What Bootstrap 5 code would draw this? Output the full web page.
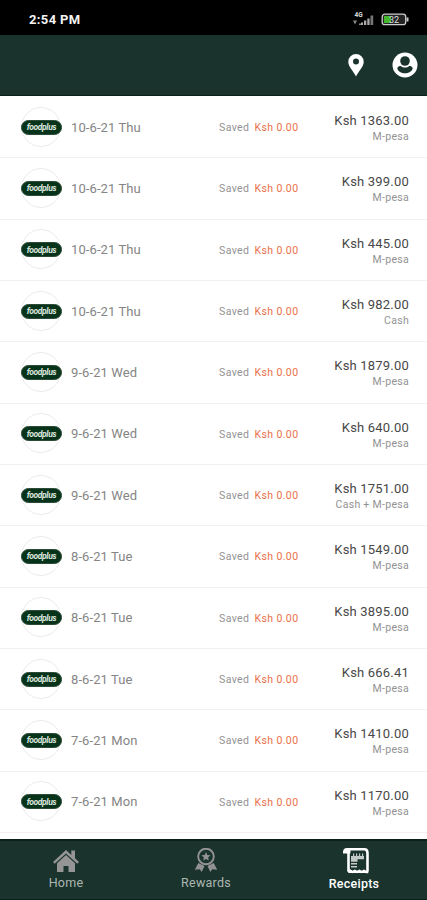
<!DOCTYPE html>
<html lang="en">
<head>
<meta charset="utf-8">
<meta name="viewport" content="width=device-width, initial-scale=1">
<title>Receipts</title>
<link href="https://cdn.jsdelivr.net/npm/bootstrap@5.3.0/dist/css/bootstrap.min.css" rel="stylesheet">
<style>
body{font-family:Roboto,"Liberation Sans",sans-serif;line-height:1}
.screen{height:900px;overflow:hidden;background:#fff}
.statusbar{height:35px;background:#000;padding:4px 18px 0 29px}
.clock{font-size:13px;font-weight:700;color:#f4f4f4;letter-spacing:.35px}
.topbar{height:61px;background:#1a332d;border-bottom:1px solid #0b2019;padding-right:9px}
.receipts-list{padding-top:1px}
.receipt{height:61.33px;border-bottom:1px solid #f1f1f1;padding:0 18px 0 21px}
.logo{width:41px;height:41px;flex:none}
.logo-ring{width:40px;height:40px;border:1px solid #ebebeb}
.logo-pill{width:41px;height:15px;left:0;top:13px;background:#06331a;border:1px solid #2b4b38;color:#dbe6dd;font-size:8.5px;letter-spacing:-.4px}
.day{font-size:13px;color:#858585;width:148px;margin-left:9px;letter-spacing:.1px}
.saved{font-size:10.5px;color:#929292;letter-spacing:.4px;white-space:nowrap;padding-top:2px}
.saved b{font-weight:400;color:#ea6f4a;margin-left:5px;letter-spacing:.4px}
.total{font-size:13px;color:#484848;letter-spacing:.2px}
.method{font-size:10.5px;color:#929292;margin-top:5px;letter-spacing:.3px}
.amounts{padding-top:2px}
.tabbar{height:61px;background:#1a332d;border-top:2px solid #0b2019;border-bottom:1px solid #0b2019}
.tab{width:144px;padding-top:7px;font-size:12.5px;color:#adb7b2;letter-spacing:.25px}
.tab svg{margin-bottom:4px}
.tab.current{color:#fff;font-weight:500}
.tabs-row{margin-left:-6px}
.tab.rewards{margin-left:-4px}
.tab.current{margin-left:4px;padding-top:6px}
</style>
<script src="https://cdn.jsdelivr.net/npm/bootstrap@5.3.0/dist/js/bootstrap.bundle.min.js"></script>
</head>
<body>
<div class="screen d-flex flex-column">
  <div class="statusbar d-flex align-items-center justify-content-between flex-shrink-0">
    <span class="clock">2:54 PM</span>
    <svg width="56" height="18" viewBox="0 0 56 18" font-family="Roboto,sans-serif">
      <text x="1.500" y="5.500" font-size="6.5" font-weight="700" fill="#ddd">4G</text>
      <path d="M0 9.500h4l-2 4zM6 12.500h2V14H6z" fill="#888"/>
      <path d="M8 11.500h2V14H8zM11 9.500h2.300V14H11zM14.300 7.500h2.300V14h-2.300z" fill="#aaa"/>
      <path d="M17.500 4.500h2.700V14h-2.700z" fill="#777"/>
      <rect x="29.200" y="3.200" width="23.500" height="10.500" rx="2.500" fill="#252525" stroke="#ccc" stroke-width="1.300"/>
      <path d="M31 5h7v7h-7z" fill="#45b52b"/>
      <path d="M53.500 6.500h2v4h-2z" fill="#ccc"/>
      <text x="36" y="11.800" font-size="9" fill="#ddd">32</text>
    </svg>
  </div>
  <header class="topbar d-flex align-items-center justify-content-end flex-shrink-0">
    <svg class="me-4" width="16" height="23" viewBox="0 0 16 23"><path fill="#fff" fill-rule="evenodd" d="M8 0a7.700 7.700 0 0 0-7.700 7.700C.3 13 5.500 17 8 22.500 10.500 17 15.700 13 15.700 7.700A7.700 7.700 0 0 0 8 0zm0 4.500a3 3 0 1 1 0 6 3 3 0 0 1 0-6z"/></svg>
    <svg class="ms-1" width="26" height="26" viewBox="0 0 26 26"><circle cx="13" cy="13" r="12.500" fill="#fff"/><circle cx="13" cy="9" r="4.800" fill="#1a332d"/><path fill="#1a332d" d="M5.300 16.300c.3-1.700 1.900-2.300 3.500-2.300 2.400 2 6 2 8.400 0 1.600 0 3.200.6 3.500 2.300-.7 3.200-4 5-7.700 5s-7-1.800-7.700-5z"/></svg>
  </header>
  <main id="receipts" class="receipts-list flex-grow-1 overflow-hidden"></main>
  <nav class="tabbar flex-shrink-0">
    <div class="tabs-row d-flex">
      <div class="tab d-flex flex-column align-items-center">
        <svg width="28" height="25" viewBox="0 0 28 25" fill="#959595"><path d="M14 2 1 14l1.700 1.800L14 5.500l11.300 10.300L27 14l-4-3.700V2.500h-3.700v4.400z"/><path d="M14 7 5 15.300V24h6.500v-6h5v6H23v-8.700z"/></svg>
        <span>Home</span>
      </div>
      <div class="tab rewards d-flex flex-column align-items-center">
        <svg width="24" height="25" viewBox="0 0 24 25"><circle cx="12" cy="8.500" r="7.800" fill="none" stroke="#929292" stroke-width="1.900"/><path fill="#929292" d="m12 4.100 1.300 2.900 3.200.3-2.400 2.100.7 3.100-2.800-1.600-2.800 1.600.7-3.100-2.400-2.100 3.200-.3zM4.300 15l6.200 3L7.700 24l-1.900-2.800-5 .6zM19.700 15l-6.200 3 2.800 6 1.900-2.800 5 .6z"/></svg>
        <span>Rewards</span>
      </div>
      <div class="tab current d-flex flex-column align-items-center">
        <svg width="28" height="27" viewBox="0 0 28 27" class="mb-0 ms-1"><path fill="none" stroke="#fff" stroke-width="2.600" d="M6.500 6V24.500M5 2.300h17.500q3 0 3 4V24.500"/><path d="M1 6.500Q.5 1 5 1t3.300 5.500z" fill="#fff"/><path fill="none" stroke="#fff" stroke-width="2.300" d="m6 25 2.300-1.300L10.500 25l2.300-1.300 2.300 1.300 2.300-1.300 2.300 1.300 2.300-1.300 2.300 1.300h2"/><path fill="#c3c9c6" d="M9 9h13v3.300H9zM11 6.500h1.200V9H11zm3 0h1.200V9H14zm3 0h1.200V9H17zm3 0h1.200V9H20zM9 12.300h6.500v2.500H9zM9 16h6v1.500H9zm0 3h6v1.500H9z"/></svg>
        <span class="mt-1">Receipts</span>
      </div>
    </div>
  </nav>
</div>
<script>
const receipts = [
  ["10-6-21 Thu","1363.00","M-pesa"],
  ["10-6-21 Thu","399.00","M-pesa"],
  ["10-6-21 Thu","445.00","M-pesa"],
  ["10-6-21 Thu","982.00","Cash"],
  ["9-6-21 Wed","1879.00","M-pesa"],
  ["9-6-21 Wed","640.00","M-pesa"],
  ["9-6-21 Wed","1751.00","Cash + M-pesa"],
  ["8-6-21 Tue","1549.00","M-pesa"],
  ["8-6-21 Tue","3895.00","M-pesa"],
  ["8-6-21 Tue","666.41","M-pesa"],
  ["7-6-21 Mon","1410.00","M-pesa"],
  ["7-6-21 Mon","1170.00","M-pesa"]
];
document.getElementById("receipts").innerHTML = receipts.map(([day,total,method]) => `
  <div class="receipt d-flex align-items-center">
    <div class="logo position-relative">
      <div class="logo-ring rounded-circle"></div>
      <div class="logo-pill rounded-pill position-absolute d-flex align-items-center justify-content-center fw-bold fst-italic">foodplus</div>
    </div>
    <div class="day">${day}</div>
    <div class="saved">Saved<b>Ksh 0.00</b></div>
    <div class="amounts ms-auto text-end">
      <div class="total">Ksh ${total}</div>
      <div class="method">${method}</div>
    </div>
  </div>`).join("");
</script>
</body>
</html>
